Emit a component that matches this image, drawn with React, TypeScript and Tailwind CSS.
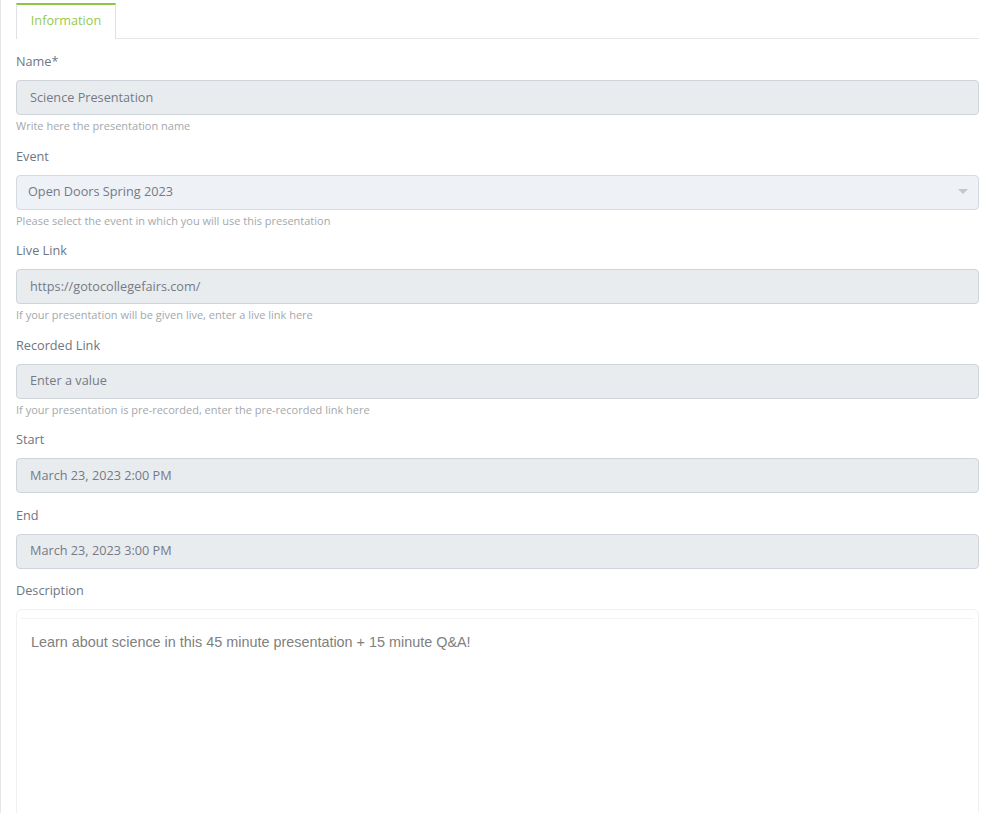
import React from 'react';

type Field = {
    label: string;
    value: string;
    help?: string;
    select?: boolean;
};

const fields: Field[] = [
    { label: 'Name*', value: 'Science Presentation', help: 'Write here the presentation name' },
    { label: 'Event', value: 'Open Doors Spring 2023', help: 'Please select the event in which you will use this presentation', select: true },
    { label: 'Live Link', value: 'https://gotocollegefairs.com/', help: 'If your presentation will be given live, enter a live link here' },
    { label: 'Recorded Link', value: 'Enter a value', help: 'If your presentation is pre-recorded, enter the pre-recorded link here' },
    { label: 'Start', value: 'March 23, 2023 2:00 PM' },
    { label: 'End', value: 'March 23, 2023 3:00 PM' },
];

function FormField({ field }: { field: Field }) {
    return (
        <div className="mb-[11.5px]">
            <div className="h-5 mb-[9px] text-[12.7px] leading-5 text-[#6f7682]">{field.label}</div>
            {field.select ? (
                <div className="h-[35px] flex items-center justify-between pl-[11px] pr-[10px] pb-[2px] rounded border border-[#d5dae0] bg-[#eef1f6] text-[12.7px] leading-5 text-[#757a86]">
                    <span>{field.value}</span>
                    <svg width="10" height="6" viewBox="0 0 10 6" className="mt-[2px]">
                        <path d="M0 0 L10 0 L5 5 Z" fill="#c4c8cd" />
                    </svg>
                </div>
            ) : (
                <div className="h-[35px] flex items-center pl-[13px] pb-[2px] rounded border border-[#ced4da] bg-[#e9ecef] text-[12.7px] leading-5 text-[#757a86]">
                    {field.value}
                </div>
            )}
            {field.help && (
                <div className="mt-[2px] text-[11px] leading-[17px] text-[#a3a8ad]">{field.help}</div>
            )}
        </div>
    );
}

export default function App() {
    return (
        <div
            className="min-h-[813px] bg-white border-l border-[#e6e6e6] pl-[15px] pr-[7px] pt-[3px]"
            style={{ fontFamily: '"Open Sans", sans-serif' }}
        >
            <div className="flex border-b border-[#e5e7ea]">
                <div className="w-[100px] h-[36px] -mb-px flex items-center justify-center pb-[2px] bg-white border-t-2 border-t-[#8dc63f] border-x border-x-[#dee2e6] text-[12.7px] text-[#95c94e]">
                    Information
                </div>
            </div>

            <div className="pt-3">
                {fields.map((f) => (
                    <FormField key={f.label} field={f} />
                ))}

                <div>
                    <div className="h-5 mb-[9px] text-[12.7px] leading-5 text-[#6f7682]">Description</div>
                    <div className="h-[220px] rounded-md border border-[#f0f0f0] bg-white">
                        <div className="h-[9px] mx-1 border-b border-[#f4f4f4]" />
                        <div
                            className="pt-[13px] pl-[14px] text-[14.4px] text-[#808080]"
                            style={{ fontFamily: '"Liberation Sans", Arial, sans-serif' }}
                        >
                            Learn about science in this 45 minute presentation + 15 minute Q&amp;A!
                        </div>
                    </div>
                </div>
            </div>
        </div>
    );
}
